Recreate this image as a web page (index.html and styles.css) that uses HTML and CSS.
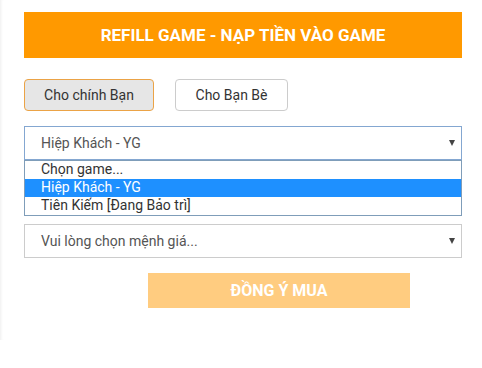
FILE: index.html
```html
<!DOCTYPE html>
<html>
<head>
<meta charset="utf-8">
<link rel="stylesheet" href="styles.css">
</head>
<body>
<div class="page">
  <div class="panel">
    <div class="header">REFILL GAME - NẠP TIỀN VÀO GAME</div>
    <div class="tabs">
      <div class="tab active">Cho chính Bạn</div>
      <div class="tab">Cho Bạn Bè</div>
    </div>
    <div class="select open">
      <span>Hiệp Khách - YG</span>
      <i class="arrow"></i>
    </div>
    <ul class="list">
      <li>Chọn game...</li>
      <li class="sel">Hiệp Khách - YG</li>
      <li>Tiên Kiếm [Đang Bảo trì]</li>
    </ul>
    <div class="select second">
      <span>Vui lòng chọn mệnh giá...</span>
      <i class="arrow"></i>
    </div>
    <div class="submit-row">
      <div class="submit">ĐỒNG Ý MUA</div>
    </div>
  </div>
</div>
</body>
</html>
```

FILE: styles.css
```css
html, body {
  margin: 0;
  padding: 0;
  background: #fff;
  font-family: Roboto, "Liberation Sans", Arial, sans-serif;
  color: #333;
}
.page {
  width: 482px;
  height: 368px;
  overflow: hidden;
}
.panel {
  width: 438px;
  height: 328px;
  padding: 12px 20px 0 24px;
  box-shadow: inset 3px 0 3px -2px #eeeeee;
}
.header {
  height: 46px;
  background: #ff9900;
  color: #fff;
  font-weight: bold;
  font-size: 17px;
  display: flex;
  align-items: center;
  justify-content: center;
}
.tabs {
  display: flex;
  gap: 21px;
  margin-top: 21px;
}
.tab {
  box-sizing: border-box;
  height: 32px;
  border: 1px solid #cccccc;
  border-radius: 4px;
  background: #fff;
  font-size: 14px;
  display: flex;
  align-items: center;
  justify-content: center;
  width: 113px;
  color: #333;
}
.tab.active {
  width: 130px;
  background: #e6e6e6;
  border-color: #eba346;
}
.select {
  box-sizing: border-box;
  height: 34px;
  border: 1px solid #cccccc;
  display: flex;
  align-items: center;
  justify-content: space-between;
  padding: 0 6px 0 16px;
  font-size: 14px;
  color: #555;
}
.select.open {
  margin-top: 15px;
  border-color: #84a7d1;
}
.select.second {
  margin-top: 8px;
}
.arrow {
  width: 0;
  height: 0;
  border-left: 3.5px solid transparent;
  border-right: 3.5px solid transparent;
  border-top: 6px solid #444;
}
.list {
  list-style: none;
  margin: 0;
  padding: 0;
  box-sizing: border-box;
  border: 1px solid #7f9db9;
  font-size: 14px;
  color: #333;
}
.list li {
  height: 18px;
  line-height: 17px;
  padding-left: 16px;
}
.list li.sel {
  background: #1e90ff;
  color: #fff;
}
.submit-row {
  display: flex;
  margin-top: 15px;
  padding-left: 124px;
}
.submit {
  width: 262px;
  height: 35px;
  background: #ffcc80;
  color: #fff;
  font-weight: bold;
  font-size: 16px;
  display: flex;
  align-items: center;
  justify-content: center;
}
```
